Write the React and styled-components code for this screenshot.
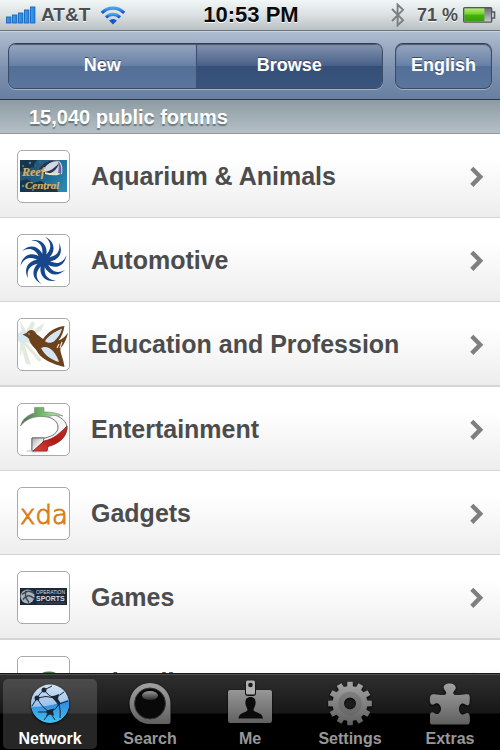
import React from "react";
import styled, { createGlobalStyle, css } from "styled-components";

const GlobalStyle = createGlobalStyle`
  * { box-sizing: border-box; }
  body {
    margin: 0;
    background: #fff;
    font-family: "Liberation Sans", Arial, Helvetica, sans-serif;
    font-weight: bold;
  }
  button { font: inherit; }
`;

const Screen = styled.div`
  display: flex;
  flex-direction: column;
  height: 100vh;
  overflow: hidden;
`;

const StatusBar = styled.div`
  display: grid;
  grid-template-columns: 1fr auto 1fr;
  align-items: center;
  flex: none;
  height: 31px;
  padding: 0 4px 0 6px;
  border-bottom: 1px solid #6d7680;
  background: linear-gradient(#f1f6f6, #dbe1e2 50%, #b9c0c2);
  text-shadow: 0 1px 0 #fff;
`;

const StatusGroup = styled.div`
  display: flex;
  align-items: center;
  justify-content: ${(p) => (p.$end ? "flex-end" : "flex-start")};
  gap: 4px;
  color: #4b4d50;
`;

const Carrier = styled.span`
  margin-right: 6px;
  font-size: 19px;
`;

const Clock = styled.time`
  color: #0b0b0b;
  font-size: 22px;
`;

const Charge = styled.span`
  margin-left: 7px;
  font-size: 18px;
`;

const NavBar = styled.header`
  display: flex;
  flex: none;
  gap: 12px;
  height: 69px;
  padding: 11px 8px 0;
  border-top: 1px solid #c6d0de;
  border-bottom: 1px solid #2b3849;
  background: linear-gradient(#b0bdd0, #8395b2 50%, #7f92b0 51%, #687fa2);
`;

const barShape = css`
  height: 46px;
  border: 1px solid #3d4c66;
  border-top-color: #343d4f;
  border-radius: 8px;
  box-shadow: 0 1px 0 #a3b2c9, inset 0 1px 1px #4a5873;
`;

const barFill = css`
  background: ${(p) =>
    p.$active
      ? "linear-gradient(#8494b0, #475f87 50%, #345078 51%, #38547d)"
      : "linear-gradient(#97a6c0, #6580a5 50%, #536f98 51%, #5a769d)"};
  color: #fff;
  font-size: 18px;
  text-shadow: 0 -1px 0 #3c4a60;
  cursor: pointer;
`;

const Segments = styled.div`
  display: grid;
  grid-template-columns: 1fr 1fr;
  flex: 1;
  overflow: hidden;
  ${barShape}
`;

const Segment = styled.button`
  padding: 0 0 2px;
  border: 0;
  border-left: ${(p) => (p.$active ? "1px solid #3d5274" : "0")};
  box-shadow: inset 0 1px 1px #4a5873;
  ${barFill}
`;

const LanguageButton = styled.button`
  flex: none;
  min-width: 97px;
  padding: 0 12px 2px;
  ${barShape}
  ${barFill}
`;

const SectionTitle = styled.h1`
  flex: none;
  margin: 0;
  height: 34px;
  padding-left: 29px;
  border-bottom: 1px solid #90989c;
  background: linear-gradient(#8d9ba4, #b5c0c6);
  color: #fff;
  font-size: 20px;
  line-height: 35px;
  text-shadow: 0 2px 1px #6b757c;
`;

const List = styled.ul`
  flex: 1;
  min-height: 0;
  margin: 0;
  padding: 0;
  overflow: hidden;
  list-style: none;
`;

const Row = styled.li`
  border-bottom: 1px solid #d5d5d6;
  background: linear-gradient(#fff 30%, #ededee);

  &:nth-child(3n) { border-bottom-width: 2px; }
`;

const RowLink = styled.a`
  display: flex;
  align-items: center;
  height: 83px;
  padding: 2px 16px 0 17px;
  color: #4c4c4d;
  font-size: 25px;
  text-decoration: none;
`;

const Thumb = styled.span`
  display: block;
  flex: none;
  width: 53px;
  height: 53px;
  margin-right: 21px;
  border: 1px solid #aaa;
  border-radius: 5px;
  background: #fff;
  overflow: hidden;

  svg { display: block; }
`;

const RowLabel = styled.span`
  flex: 1;
  line-height: 30px;
  padding-bottom: 2px;
`;

const TabBar = styled.nav`
  display: grid;
  grid-template-columns: repeat(5, 1fr);
  flex: none;
  height: 77px;
  padding: 5px 0 3px;
  border-top: 1px solid #141714;
  box-shadow: inset 0 1px 0 #4d504d;
  background: linear-gradient(#2f2f2f, #171717 39px, #000 40px);
`;

const Tab = styled.a`
  display: flex;
  flex-direction: column;
  align-items: center;
  margin: 0 3px;
  border-radius: 5px;
  background: ${(p) => (p.$active ? "rgba(255, 255, 255, 0.15)" : "none")};
  color: ${(p) => (p.$active ? "#fff" : "#989898")};
  font-size: 16px;
  line-height: 20px;
  text-decoration: none;
`;

const SignalIcon = () => (
  <svg width="31" height="18" viewBox="0 0 31 18" aria-hidden="true">
    <defs>
      <linearGradient id="signal" x1="0" y1="0" x2="1" y2="0">
        <stop offset="0" stopColor="#2fa5f5" />
        <stop offset="1" stopColor="#1a86e6" />
      </linearGradient>
    </defs>
    {[6, 8, 10, 13, 16].map((h, i) => (
      <rect key={h} x={i * 6 + 0.5} y={17 - h} width="4.4" height={h} fill="url(#signal)" stroke="#2461b5" strokeWidth=".9" />
    ))}
  </svg>
);

const WifiIcon = () => (
  <svg width="26" height="20" viewBox="0 0 26 20" aria-hidden="true">
    <defs>
      <linearGradient id="wifi" x1="0" y1="0" x2="0" y2="1">
        <stop offset="0" stopColor="#46a5f0" />
        <stop offset="1" stopColor="#0e4fd0" />
      </linearGradient>
    </defs>
    <g fill="none" stroke="url(#wifi)" strokeWidth="3.1">
      <path d="M1.8 7.900a15.6 15.6 0 0 1 22.4 0" />
      <path d="M6 12.300a9.8 9.8 0 0 1 14 0" />
    </g>
    <path d="M13 19.5l-3.9-4a5.6 5.6 0 0 1 7.8 0z" fill="#1155d4" />
  </svg>
);

const BluetoothIcon = () => (
  <svg width="16" height="24" viewBox="0 0 16 24" fill="none" stroke="#7b7e82" strokeWidth="1.9" aria-hidden="true">
    <path d="M2 6l11 11.2-5.4 5.2V1.6L13 6.8 2 18" />
  </svg>
);

const BatteryIcon = () => (
  <svg width="34" height="18" viewBox="0 0 34 18" aria-hidden="true">
    <defs>
      <linearGradient id="cell" x1="0" y1="0" x2="0" y2="1">
        <stop offset="0" stopColor="#b4ed70" />
        <stop offset=".45" stopColor="#6fd128" />
        <stop offset=".5" stopColor="#41b40a" />
        <stop offset="1" stopColor="#38a005" />
      </linearGradient>
      <linearGradient id="empty" x1="0" y1="0" x2="0" y2="1">
        <stop offset="0" stopColor="#66696e" />
        <stop offset="1" stopColor="#c9ccd0" />
      </linearGradient>
    </defs>
    <rect x="1.7" y="1.7" width="28" height="14.4" rx="1" fill="url(#empty)" stroke="#53575f" strokeWidth="1.4" />
    <rect x="2.4" y="2.4" width="20" height="13" fill="url(#cell)" />
    <path d="M30 6h2.6v6H30" fill="#c9ccd0" stroke="#53575f" strokeWidth="1.4" />
  </svg>
);

const Chevron = () => (
  <svg width="14" height="22" viewBox="0 0 14 22" fill="none" stroke="#7f7f80" strokeWidth="4.4" aria-hidden="true">
    <path d="M1.8 2.2l8.4 8.6-8.4 8.6" />
  </svg>
);

const ReefLogo = () => (
  <svg width="51" height="51" viewBox="0 0 51 51">
    <defs>
      <linearGradient id="sea" x1="0" y1="0.3" x2="1" y2="0.7">
        <stop offset="0" stopColor="#23506d" />
        <stop offset=".55" stopColor="#1f6689" />
        <stop offset="1" stopColor="#2787b4" />
      </linearGradient>
    </defs>
    <rect x="2" y="9" width="47" height="32" fill="url(#sea)" />
    <path d="M2 9h17l-3 4 2 3-7 1-3 5-6-2zM2 30l7-2 6 4 8-2 7 5 8 1 2 5H2z" fill="#15364b" />
    <g fill="#568198">
      <circle cx="5" cy="15" r="1" /><circle cx="12" cy="12" r="1.2" /><circle cx="8" cy="24" r="1" />
      <circle cx="5" cy="35" r="1.3" /><circle cx="15" cy="39" r="1" /><circle cx="27" cy="38" r="1.2" />
      <circle cx="17" cy="15" r=".8" /><circle cx="22" cy="11" r=".8" />
    </g>
    <path d="M22 17c4-7 13-9 19-7 3 2 4 7 3 13-7 1-15 1-20-2z" fill="#d0d8e4" />
    <path d="M21 18c5-8 12-10 20-8-8 0-12 3-16 9zM24 21c6 0 11-2 17-9-2 8-8 11-15 11z" fill="#28354e" />
    <path d="M40 10c3 3 4 8 3 13l-3-1c1-4 1-8 0-12z" fill="#765ca4" />
    <path d="M27 21q8 3 15 1l-2 2q-6 1-13-1z" fill="#eee9b8" />
    <g fill="#d9ae62" stroke="#d9ae62" strokeWidth=".2" fontFamily="Liberation Serif, serif" fontStyle="italic" fontWeight="bold">
      <text x="4" y="25" fontSize="12">Reef</text>
      <text x="7" y="38" fontSize="11">Central</text>
    </g>
  </svg>
);

const BLADES = Array.from({ length: 10 }, (_, i) => i * 36);

const PinwheelLogo = () => (
  <svg width="51" height="51" viewBox="0 0 51 51">
    <g transform="translate(25.5 25.5)" fill="#17468c">
      {BLADES.map((a) => (
        <path key={a} transform={`rotate(${a})`} d="M2-23.500C10-19.500 12.500-12 7.500-5L1 2-1-3C8-9 9.500-17 2-23.500z" />
      ))}
      <circle r="4" />
    </g>
  </svg>
);

const BirdLogo = () => (
  <svg width="51" height="51" viewBox="0 0 51 51">
    <g fill="#e5eade">
      <path d="M5 17L14 2l3 2-5 14zM7 17L26 4l-2 7-13 9zM2 2l8 13-6 2zM5 20l19 21-3 2L4 23zM5 21l8 25-5-1-6-21zM5 21l-2 16-1-2V20z" />
      <path d="M7 19l23 9-2 3-21-8z" />
    </g>
    <circle cx="5" cy="18" r="6" fill="#d6e8f2" />
    <path d="M4.500 15.500l4-1.500c3-5 8-3.500 10 1l6.500 5c5-7 12-12 21.500-13-1 6-3 11-6 14.500 4-1.500 7-4 9.500-8-1.500 7-3.500 11-7.500 16-1 3 3 10 4 18.500C34 45 24 40 20 34c-2-5-8-8-9-14-2-2.500-3.500-3-6.500-4.500z" fill="#6b421b" />
    <path d="M27 22c4-6 10-9.500 17-12.500-1 5-4 9-8 13-4 2-7 1.500-9-.5zM23 29c4-2 8-1 12 3 3 4 5 7 6 11-7-2-14-6-18-14z" fill="#d5e5f4" />
    <path d="M41 25l-2 4M44 23l-2 6" stroke="#efe6dc" strokeWidth="1.200" />
    <circle cx="11" cy="15" r=".7" fill="#e8d9c3" />
  </svg>
);

const RibbonLogo = () => (
  <svg width="51" height="51" viewBox="0 0 51 51">
    <defs>
      <linearGradient id="leaf" x1="0" y1="0" x2="1" y2="0">
        <stop offset="0" stopColor="#536654" />
        <stop offset=".5" stopColor="#72b86a" />
        <stop offset="1" stopColor="#d5ead2" />
      </linearGradient>
      <linearGradient id="silver" x1="0" y1="0" x2="1" y2="1">
        <stop offset="0" stopColor="#a8aaac" />
        <stop offset=".6" stopColor="#f8f8f8" />
      </linearGradient>
      <linearGradient id="crimson" x1="0" y1="1" x2="1" y2="0">
        <stop offset="0" stopColor="#e5413a" />
        <stop offset=".5" stopColor="#b31a17" />
        <stop offset="1" stopColor="#d2281f" />
      </linearGradient>
    </defs>
    <ellipse cx="20" cy="47" rx="12" ry="1.800" fill="#ddd" />
    <path d="M20 9c17-1 29 6 29 15 0 10-11 16-20 18v4H14V34h13c8-2 13-5 13-11 0-7-9-12-21-11z" fill="#f6f6f6" stroke="#6f7174" strokeWidth="1" />
    <path d="M14 34h12l-1 4-9 9h-2z" fill="url(#silver)" stroke="#55585b" strokeWidth=".8" />
    <path d="M49 22c0 12-9 18-19 20.500l-1 4.500H15l11-10c10-2 16-8 23-15z" fill="url(#crimson)" stroke="#7b2826" strokeWidth=".8" />
    <path d="M2.500 22c2-7 7-11 14-13V3.500H26V8c8 0 14 1 19 4-8-2-13 0-16 1-12-2-21 2-26.500 9z" fill="url(#leaf)" stroke="#73877a" strokeWidth=".6" />
  </svg>
);

const XdaLogo = () => (
  <svg width="51" height="51" viewBox="0 0 51 51">
    <text x="2" y="36" fontFamily="DejaVu Sans, sans-serif" fontWeight="200" fontSize="26" fill="#e58a20" stroke="#d97f1c" strokeWidth="1">xda</text>
  </svg>
);

const SportsLogo = () => (
  <svg width="51" height="51" viewBox="0 0 51 51">
    <rect x="2" y="16" width="47" height="17" fill="#1b2836" />
    <circle cx="9.500" cy="24.500" r="7" fill="#a9b1ba" />
    <path d="M4 22.500q6-6 12-1M5 27.500q5-7 11-1M8 18.500q-2 6 3 12" fill="none" stroke="#3b4857" strokeWidth="1.500" />
    <g fill="#d4dae0" fontFamily="Liberation Sans, sans-serif">
      <text x="18" y="21.500" fontSize="5" fontWeight="normal">OPERATION</text>
      <text x="18" y="29" fontSize="7">SPORTS</text>
    </g>
    <path d="M19 31h28" stroke="#5b6875" strokeWidth=".6" />
  </svg>
);

const GlobeLogo = () => (
  <svg width="51" height="51" viewBox="0 0 51 51">
    <circle cx="31" cy="33" r="18.500" fill="#3e7b45" />
    <circle cx="31" cy="34" r="13" fill="#e9f1e5" />
  </svg>
);

const TabDrawing = styled.svg`
  display: block;
  flex: none;
  width: 50px;
  height: 50px;
  filter: drop-shadow(0 1px 1px #000);
`;

const NetworkIcon = () => (
  <TabDrawing viewBox="0 0 50 50" aria-hidden="true">
    <defs>
      <linearGradient id="globeTop" x1="0" y1="0" x2="0" y2="1">
        <stop offset="0" stopColor="#d3e3f4" />
        <stop offset="1" stopColor="#6fa7e4" />
      </linearGradient>
      <linearGradient id="globeBottom" x1="0" y1="0" x2="0" y2="1">
        <stop offset="0" stopColor="#2d83dd" />
        <stop offset="1" stopColor="#41c3f1" />
      </linearGradient>
    </defs>
    <circle cx="25" cy="24.500" r="19" fill="url(#globeTop)" />
    <path d="M6.200 27.500C19 28.500 32 25.500 43.500 20.500A19 19 0 1 1 6.200 27.500z" fill="url(#globeBottom)" />
    <g stroke="#1c2734" strokeWidth="1" fill="none">
      <path d="M19 11q5 7 11 8M19 11q-4 3-7 8M12 19q9-3 18 0M30 19l4 6M30 19q5-3 9-6M19 11l8-4M12 19l-5 8M34 25l9-3M34 25q-2 5-9 8M34 25q2 7 1 14M25 33l-12 0M25 33l-6 8M25 33l5 8M12 19q5 10 13 14" />
    </g>
    <g fill="#1c2734">
      <circle cx="19" cy="11" r="2.500" /><circle cx="12" cy="19" r="2.500" />
      <path d="M26 17.500l4-1 4-1.500-1 5 2.500 4-2 3-2.500-4z" />
      <path d="M21 32l4-1.500 4-1-1 3 1 4-4-1-4 2 1-3z" />
    </g>
  </TabDrawing>
);

const GreyFill = () => (
  <linearGradient id="grey" gradientUnits="userSpaceOnUse" x1="0" y1="4" x2="0" y2="46">
    <stop offset="0" stopColor="#a2a2a2" />
    <stop offset="1" stopColor="#5e5e5e" />
  </linearGradient>
);

const SearchIcon = () => (
  <TabDrawing viewBox="0 0 50 50" aria-hidden="true">
    <defs>
      <GreyFill />
      <linearGradient id="shine" x1="0" y1="0" x2="0" y2="1">
        <stop offset="0" stopColor="#999" />
        <stop offset="1" stopColor="#2a2a2a" />
      </linearGradient>
    </defs>
    <path d="M25 4a20.500 20.500 0 0 1 20.500 20.500v18.500a2 2 0 0 1-2 2H25a20.500 20.500 0 0 1 0-41z" fill="url(#grey)" />
    <circle cx="25" cy="24.500" r="15.500" fill="#090909" stroke="#333" />
    <ellipse cx="25" cy="16.500" rx="8" ry="4.500" fill="url(#shine)" />
  </TabDrawing>
);

const MeIcon = () => (
  <TabDrawing viewBox="0 0 50 50" aria-hidden="true">
    <path d="M5 11h15v3q0 3 3 3h5q3 0 3-3v-3h14q2 0 2 2v28q0 3-2 3H5q-2 0-2-3V13q0-2 2-2z" fill="url(#grey)" />
    <rect x="21" y="1.500" width="9" height="14" rx="1.500" fill="#b0b0b0" />
    <circle cx="25.500" cy="6" r="2.300" fill="#191919" />
    <path d="M25.500 18c4 0 5.500 3 5 7-.5 3-2 4-2 6 1 3 9 2 9.500 8.500H13.500c.5-6.500 8-5.500 9-8.500 0-2-1.500-3-2-6-.5-4 1-7 5-7z" fill="#0b0b0b" />
  </TabDrawing>
);

const point = (radius, degrees) => {
  const a = (degrees * Math.PI) / 180;
  return `${(25 + radius * Math.sin(a)).toFixed(2)} ${(24.5 - radius * Math.cos(a)).toFixed(2)}`;
};

const GEAR_PATH =
  "M" +
  Array.from({ length: 12 }, (_, i) => i * 30)
    .map((a) => [point(17.5, a - 9.500), point(22, a - 7), point(22, a + 7), point(17.5, a + 9.500)].join("L"))
    .join("L") +
  "zM25 18.500a6 6 0 1 1 0 12 6 6 0 0 1 0-12z";

const SettingsIcon = () => (
  <TabDrawing viewBox="0 0 50 50" aria-hidden="true">
    <path fillRule="evenodd" d={GEAR_PATH} fill="url(#grey)" />
    <circle cx="25" cy="24.500" r="9" fill="none" stroke="#606060" strokeWidth="5.500" opacity=".4" />
  </TabDrawing>
);

const ExtrasIcon = () => (
  <TabDrawing viewBox="0 0 50 50" aria-hidden="true">
    <path
      d="M7 15.500c4-1 8 1 12 .5 3-.5 2.500-3 1-4.500-3-3-1-7 4.500-7s8 4 5 7c-1.500 1.500-2 4 1 4.500 4 .5 9-1.500 13.500-.5 1.500 3 .5 6 .5 9-1 3-3 2-4.500.8-3-2.300-6 .7-6 4.700s3 7 6 4.700c1.500-1.200 4-1.200 4.500 1.300.5 3 .5 6 0 8-.5 1.500-1.500 1.500-3 1.500H7.500C6 45.500 5 45 5 43.500v-7.800c.5-3 3-2.700 4.500-1.500 3 2.300 6.500-.7 6.500-4.500s-3.500-7-6.500-4.700C8 26.200 5.500 26 5 23c-.5-3 0-7 2-7.500z"
      fill="url(#grey)"
    />
  </TabDrawing>
);

const CATEGORIES = [
  { name: "Aquarium & Animals", Logo: ReefLogo },
  { name: "Automotive", Logo: PinwheelLogo },
  { name: "Education and Profession", Logo: BirdLogo },
  { name: "Entertainment", Logo: RibbonLogo },
  { name: "Gadgets", Logo: XdaLogo },
  { name: "Games", Logo: SportsLogo },
  { name: "Miscellaneous", Logo: GlobeLogo },
];

const TABS = [
  { name: "Network", Icon: NetworkIcon, active: true },
  { name: "Search", Icon: SearchIcon },
  { name: "Me", Icon: MeIcon },
  { name: "Settings", Icon: SettingsIcon },
  { name: "Extras", Icon: ExtrasIcon },
];

export default function App() {
  return (
    <Screen>
      <GlobalStyle />
      <StatusBar>
        <StatusGroup>
          <SignalIcon />
          <Carrier>AT&amp;T</Carrier>
          <WifiIcon />
        </StatusGroup>
        <Clock>10:53 PM</Clock>
        <StatusGroup $end>
          <BluetoothIcon />
          <Charge>71 %</Charge>
          <BatteryIcon />
        </StatusGroup>
      </StatusBar>
      <NavBar>
        <Segments>
          <Segment type="button">New</Segment>
          <Segment type="button" $active aria-pressed="true">Browse</Segment>
        </Segments>
        <LanguageButton type="button">English</LanguageButton>
      </NavBar>
      <SectionTitle>15,040 public forums</SectionTitle>
      <List>
        {CATEGORIES.map(({ name, Logo }) => (
          <Row key={name}>
            <RowLink href="#">
              <Thumb aria-hidden="true"><Logo /></Thumb>
              <RowLabel>{name}</RowLabel>
              <Chevron />
            </RowLink>
          </Row>
        ))}
      </List>
      <TabBar>
        {TABS.map(({ name, Icon, active }) => (
          <Tab key={name} href="#" $active={active} aria-current={active ? "page" : undefined}>
            <Icon />
            {name}
          </Tab>
        ))}
      </TabBar>
    </Screen>
  );
}
